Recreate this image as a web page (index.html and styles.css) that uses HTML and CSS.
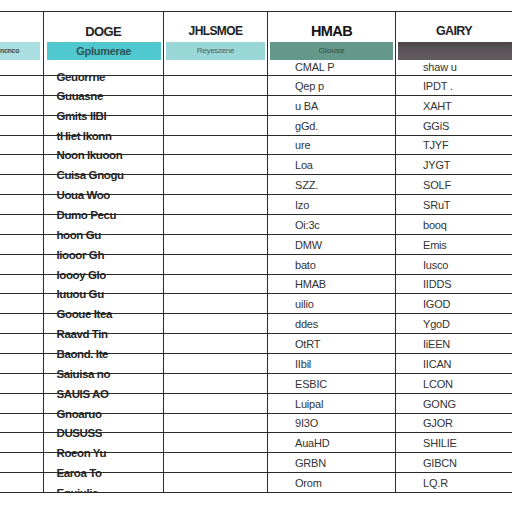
FILE: index.html
```html
<!DOCTYPE html>
<html>
<head>
<meta charset="utf-8">
<link rel="stylesheet" href="styles.css">
</head>
<body>
<div class="sheet">
  <div class="row head">
    <div class="cell"></div>
    <div class="cell hc h2">DOGE</div>
    <div class="cell hc h3">JHLSMOE</div>
    <div class="cell hc h4">HMAB</div>
    <div class="cell hc h5">GAIRY</div>
  </div>
  <div class="row band">
    <div class="cell"><div class="b b1">ncnco</div></div>
    <div class="cell"><div class="b b2">Gplumerae</div></div>
    <div class="cell"><div class="b b3">Reyeszene</div></div>
    <div class="cell"><div class="b b4">Gtouse</div></div>
    <div class="cell"><div class="b b5"></div></div>
  </div>
  <div class="row first"><div class="cell"></div><div class="cell n">Geuorrne</div><div class="cell"></div><div class="cell v">CMAL P</div><div class="cell v w">shaw u</div></div>
  <div class="row"><div class="cell"></div><div class="cell n">Guuasne</div><div class="cell"></div><div class="cell v">Qep p</div><div class="cell v w">IPDT .</div></div>
  <div class="row"><div class="cell"></div><div class="cell n">Gmits IIBI</div><div class="cell"></div><div class="cell v">u BA</div><div class="cell v w">XAHT</div></div>
  <div class="row"><div class="cell"></div><div class="cell n">tHiet Ikonn</div><div class="cell"></div><div class="cell v">gGd.</div><div class="cell v w">GGiS</div></div>
  <div class="row"><div class="cell"></div><div class="cell n">Noon Ikuoon</div><div class="cell"></div><div class="cell v">ure</div><div class="cell v w">TJYF</div></div>
  <div class="row"><div class="cell"></div><div class="cell n">Cuisa Gnogu</div><div class="cell"></div><div class="cell v">Loa</div><div class="cell v w">JYGT</div></div>
  <div class="row"><div class="cell"></div><div class="cell n">Uoua Woo</div><div class="cell"></div><div class="cell v">SZZ.</div><div class="cell v w">SOLF</div></div>
  <div class="row"><div class="cell"></div><div class="cell n">Dumo Pecu</div><div class="cell"></div><div class="cell v">Izo</div><div class="cell v w">SRuT</div></div>
  <div class="row"><div class="cell"></div><div class="cell n">hoon Gu</div><div class="cell"></div><div class="cell v">Oi:3c</div><div class="cell v w">booq</div></div>
  <div class="row"><div class="cell"></div><div class="cell n">Iiooor Gh</div><div class="cell"></div><div class="cell v">DMW</div><div class="cell v w">Emis</div></div>
  <div class="row"><div class="cell"></div><div class="cell n">Ioooy Glo</div><div class="cell"></div><div class="cell v">bato</div><div class="cell v w">Iusco</div></div>
  <div class="row"><div class="cell"></div><div class="cell n">Iuuou Gu</div><div class="cell"></div><div class="cell v">HMAB</div><div class="cell v w">IIDDS</div></div>
  <div class="row"><div class="cell"></div><div class="cell n">Gooue Itea</div><div class="cell"></div><div class="cell v">uilio</div><div class="cell v w">IGOD</div></div>
  <div class="row"><div class="cell"></div><div class="cell n">Raavd Tin</div><div class="cell"></div><div class="cell v">ddes</div><div class="cell v w">YgoD</div></div>
  <div class="row"><div class="cell"></div><div class="cell n">Baond. Ite</div><div class="cell"></div><div class="cell v">OtRT</div><div class="cell v w">IiEEN</div></div>
  <div class="row"><div class="cell"></div><div class="cell n">Saiuisa no</div><div class="cell"></div><div class="cell v">IIbil</div><div class="cell v w">IICAN</div></div>
  <div class="row"><div class="cell"></div><div class="cell n">SAUIS AO</div><div class="cell"></div><div class="cell v">ESBIC</div><div class="cell v w">LCON</div></div>
  <div class="row"><div class="cell"></div><div class="cell n">Gnoaruo</div><div class="cell"></div><div class="cell v">Luipal</div><div class="cell v w">GONG</div></div>
  <div class="row"><div class="cell"></div><div class="cell n">DUSUSS</div><div class="cell"></div><div class="cell v">9I3O</div><div class="cell v w">GJOR</div></div>
  <div class="row"><div class="cell"></div><div class="cell n">Roeon Yu</div><div class="cell"></div><div class="cell v">AuaHD</div><div class="cell v w">SHILIE</div></div>
  <div class="row"><div class="cell"></div><div class="cell n">Earoa To</div><div class="cell"></div><div class="cell v">GRBN</div><div class="cell v w">GIBCN</div></div>
  <div class="row"><div class="cell"></div><div class="cell n">Egujulie</div><div class="cell"></div><div class="cell v">Orom</div><div class="cell v w">LQ.R</div></div>
</div>
</body>
</html>
```

FILE: styles.css
```css
html, body {
  margin: 0;
  padding: 0;
  background: #ffffff;
}
body {
  font-family: "Liberation Sans", Arial, sans-serif;
  color: #2a2a2a;
}
.sheet {
  margin-top: 11px;
  border-top: 1.5px solid #2e2e2e;
  width: 512px;
}
.row {
  display: grid;
  grid-template-columns: 43.5px 120.5px 104px 128px 1fr;
  height: 19.86px;
  box-sizing: border-box;
  border-bottom: 1.5px solid #2b2b2b;
}
.cell {
  box-sizing: border-box;
  border-right: 1.5px solid #2e2e2e;
  display: flex;
  min-width: 0;
  white-space: nowrap;
}
.cell:last-child {
  border-right: none;
}
.row.head {
  height: 28.5px;
  border-bottom: none;
}
.hc {
  justify-content: center;
  align-items: center;
  padding-top: 10px;
  font-weight: bold;
  letter-spacing: -0.6px;
  color: #222;
}
.h2 { font-size: 13px; }
.h3 { font-size: 12px; }
.h4 { font-size: 14.5px; color: #111; }
.h5 { font-size: 12.5px; }
.row.band {
  height: 21px;
  border-bottom: none;
}
.band .cell {
  align-items: flex-start;
}
.b {
  height: 18px;
  margin-top: 1px;
  display: flex;
  align-items: center;
  justify-content: center;
  flex: 1;
  overflow: hidden;
}
.b1 {
  background: #a9dfe0;
  margin-right: 3px;
  justify-content: flex-start;
  font-size: 7px;
  font-weight: bold;
  color: #3d4c4f;
  letter-spacing: -0.3px;
}
.b2 {
  background: #4fc8d0;
  margin: 1px 2px 0 3px;
  font-size: 11px;
  font-weight: bold;
  color: #2d5458;
  letter-spacing: -0.3px;
}
.b3 {
  background: #9ad8d8;
  margin: 1px 2px 0 2px;
  font-size: 8px;
  color: #4a5f66;
  letter-spacing: -0.3px;
}
.b4 {
  background: #64988a;
  margin: 1px 2px 0 2px;
  font-size: 8px;
  color: #2f4a42;
}
.b5 {
  background: linear-gradient(#4a4347, #5b5458 40%, #625c5f);
  margin: 1px 0 0 2px;
}
.row.first {
  height: 14.5px;
}
.n {
  align-items: flex-end;
  padding-left: 13px;
  font-size: 11.5px;
  font-weight: bold;
  letter-spacing: -0.4px;
  line-height: 12px;
  color: #262626;
  margin-bottom: -7px;
}
.v {
  align-items: flex-end;
  padding-left: 27px;
  padding-bottom: 3px;
  font-size: 11px;
  line-height: 11px;
  color: #333;
  letter-spacing: -0.2px;
}
.v.w {
  padding-left: 27px;
}
```
